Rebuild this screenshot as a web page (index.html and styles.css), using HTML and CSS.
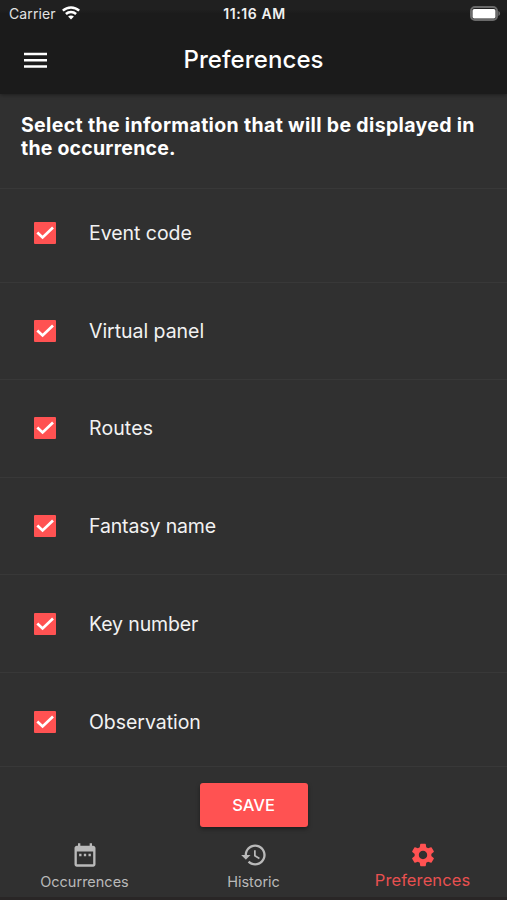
FILE: index.html
```html
<!DOCTYPE html>
<html lang="en">
<head>
<meta charset="utf-8">
<title>Preferences</title>
<link rel="stylesheet" href="styles.css">
</head>
<body>
<div class="app">
  <header class="top">
    <div class="status">
      <div class="carrier"><span class="carrier-name">Carrier</span>
        <svg class="wifi" viewBox="0 0 18 14"><path d="M.8 4.700C5.500.3 12.500.3 17.200 4.700M3.900 8c2.900-2.700 7.300-2.700 10.200 0" fill="none" stroke="#fff" stroke-width="2.500"/><path d="M9 13.500 6.100 10.600c1.600-1.500 4.200-1.500 5.800 0z" fill="#fff"/></svg>
      </div>
      <span class="time">11:16 AM</span>
      <svg class="battery" viewBox="0 0 31 15"><rect x="1" y="1" width="26" height="13" rx="4" fill="none" stroke="#6a6a6a" stroke-width="2"/><rect x="2.500" y="3" width="23" height="9.500" rx="1.800" fill="#fff"/><path d="M28.300 5c2.400.8 2.400 4.200 0 5z" fill="#6a6a6a"/></svg>
    </div>
    <div class="bar">
      <svg class="menu" viewBox="0 0 24 17"><path d="M0 2h23M0 8.300h23M0 14.500h23" stroke="#fff" stroke-width="2.600"/></svg>
      <h1 class="title">Preferences</h1>
    </div>
  </header>
  <p class="intro"><span class="intro-a">Select the information that will be displayed in</span><br><span class="intro-b">the occurrence.</span></p>
  <ul class="list">
    <li class="row"><svg class="check" viewBox="0 0 22 22"><path d="M3.300 10.500l5.300 5L19 5.500"/></svg><span class="label">Event code</span></li>
    <li class="row"><svg class="check" viewBox="0 0 22 22"><path d="M3.300 10.500l5.300 5L19 5.500"/></svg><span class="label">Virtual panel</span></li>
    <li class="row"><svg class="check" viewBox="0 0 22 22"><path d="M3.300 10.500l5.300 5L19 5.500"/></svg><span class="label label-routes">Routes</span></li>
    <li class="row"><svg class="check" viewBox="0 0 22 22"><path d="M3.300 10.500l5.300 5L19 5.500"/></svg><span class="label label-tight">Fantasy name</span></li>
    <li class="row"><svg class="check" viewBox="0 0 22 22"><path d="M3.300 10.500l5.300 5L19 5.500"/></svg><span class="label label-tight">Key number</span></li>
    <li class="row"><svg class="check" viewBox="0 0 22 22"><path d="M3.300 10.500l5.300 5L19 5.500"/></svg><span class="label">Observation</span></li>
  </ul>
  <div class="actions"><button class="save">SAVE</button></div>
  <nav class="tabs">
    <div class="tab"><svg class="icon" viewBox="0 0 24 24"><path d="M9 11H7v2h2v-2zm4 0h-2v2h2v-2zm4 0h-2v2h2v-2zm2-7h-1V2h-2v2H8V2H6v2H5c-1.110 0-1.990.9-1.990 2L3 20c0 1.100.89 2 2 2h14c1.100 0 2-.9 2-2V6c0-1.100-.9-2-2-2zm0 16H5V9h14v11z"/></svg><span class="tab-label">Occurrences</span></div>
    <div class="tab"><svg class="icon" viewBox="0 0 24 24"><path d="M13 3c-4.970 0-9 4.030-9 9H1l3.890 3.890.070.140L9 12H6c0-3.870 3.130-7 7-7s7 3.130 7 7-3.130 7-7 7c-1.930 0-3.680-.79-4.940-2.060l-1.420 1.420C8.270 19.990 10.510 21 13 21c4.970 0 9-4.030 9-9s-4.030-9-9-9zm-1 5v5l4.280 2.540.72-1.210-3.500-2.080V8H12z"/></svg><span class="tab-label">Historic</span></div>
    <div class="tab tab-active"><svg class="icon" viewBox="0 0 24 24"><path d="M19.140 12.940c.04-.3.060-.61.060-.94 0-.32-.02-.64-.07-.94l2.030-1.580c.18-.14.23-.41.12-.61l-1.920-3.320c-.12-.22-.37-.29-.59-.22l-2.390.96c-.5-.38-1.030-.7-1.620-.94L14.400 2.810c-.04-.24-.24-.41-.48-.41h-3.840c-.24 0-.43.17-.47.41L9.250 5.350C8.660 5.590 8.120 5.920 7.630 6.290L5.240 5.330c-.22-.08-.47 0-.59.22L2.740 8.870c-.12.21-.08.47.12.61l2.030 1.580c-.05.3-.09.63-.09.94s.02.64.07.94l-2.030 1.580c-.18.14-.23.41-.12.61l1.920 3.320c.12.22.37.29.59.22l2.390-.96c.5.38 1.030.7 1.620.94l.36 2.540c.05.24.24.41.48.41h3.840c.24 0 .44-.17.47-.41l.36-2.540c.59-.24 1.130-.56 1.620-.94l2.390.96c.22.08.47 0 .59-.22l1.920-3.320c.12-.22.070-.47-.12-.61l-2.010-1.580zM12 15.600c-1.980 0-3.600-1.620-3.600-3.600s1.620-3.600 3.600-3.600 3.600 1.620 3.600 3.600-1.620 3.600-3.600 3.600z"/></svg><span class="tab-label">Preferences</span></div>
  </nav>
</div>
</body>
</html>
```
FILE: styles.css
```css
* { box-sizing: border-box; }
body { margin: 0; background: #303030; color: #fff; font-family: Inter, sans-serif; }
.app { display: flex; flex-direction: column; width: 507px; height: 900px; overflow: hidden; border-bottom: 3px solid #292626; }
.top { flex: none; height: 94px; background: #1b1b1b; box-shadow: 0 1px 4px rgba(0, 0, 0, .4); }
.status { display: grid; grid-template-columns: 1fr auto 1fr; align-items: center; height: 27px; padding: 0 6px 0 9px; background: linear-gradient(#202020 35%, #1b1b1b 50%); }
.carrier { display: flex; align-items: center; gap: 6px; color: #e2e2e2; font-size: 14px; letter-spacing: .1px; }
.wifi { width: 18px; height: 14px; margin-top: -2px; }
.time { margin-left: -1px; font-size: 14px; font-weight: 600; letter-spacing: .6px; color: #f0f0f0; }
.battery { width: 31px; height: 15px; margin-top: -1px; justify-self: end; }
.bar { display: grid; grid-template-columns: 1fr auto 1fr; align-items: center; height: 66px; padding: 0 24px; }
.menu { width: 24px; height: 17px; }
.title { margin: 0; padding-bottom: 1px; font-size: 24px; font-weight: 500; letter-spacing: .1px; }
.intro { flex: none; height: 95px; margin: 0; padding: 20px 21px 0; border-bottom: 1px solid #383838; font-size: 19.5px; font-weight: 700; line-height: 23px; white-space: nowrap; }
.intro-a { letter-spacing: .34px; }
.intro-b { letter-spacing: .22px; }
.list { flex: none; margin: 0; padding: 0; list-style: none; }
.row { display: flex; align-items: center; gap: 33px; height: 97.67px; padding-left: 34px; border-bottom: 1px solid #383838; font-size: 19.5px; color: #f2f2f2; }
.row:first-child { height: 93.5px; padding-bottom: 4px; }
.row:last-child { height: 93.5px; padding-top: 5px; }
.label { letter-spacing: -.04px; }
.label-routes { letter-spacing: .12px; }
.label-tight { letter-spacing: -.13px; }
.check { width: 22px; height: 22px; border-radius: 1px; background: #ff5252; fill: none; stroke: #fff; stroke-width: 2.7; }
.actions { display: flex; flex: none; justify-content: center; height: 72px; padding-top: 16px; }
.save { width: 108px; height: 44px; border: 0; border-radius: 3px; background: #ff5252; color: #fff; box-shadow: 0 2px 4px rgba(0, 0, 0, .4); font: 500 16.5px Inter, sans-serif; }
.tabs { display: grid; grid-template-columns: repeat(3, 1fr); color: #b9b9b9; }
.tab { display: flex; flex-direction: column; align-items: center; padding-top: 2px; font-size: 14.5px; }
.tab-active { color: #ff5252; font-size: 16.5px; letter-spacing: .1px; }
.icon { width: 28px; height: 28px; fill: currentColor; }
.tab-label { line-height: 22px; padding-top: 2px; }
.tab-active .tab-label { padding-top: 0; color: #e85050; }
```
